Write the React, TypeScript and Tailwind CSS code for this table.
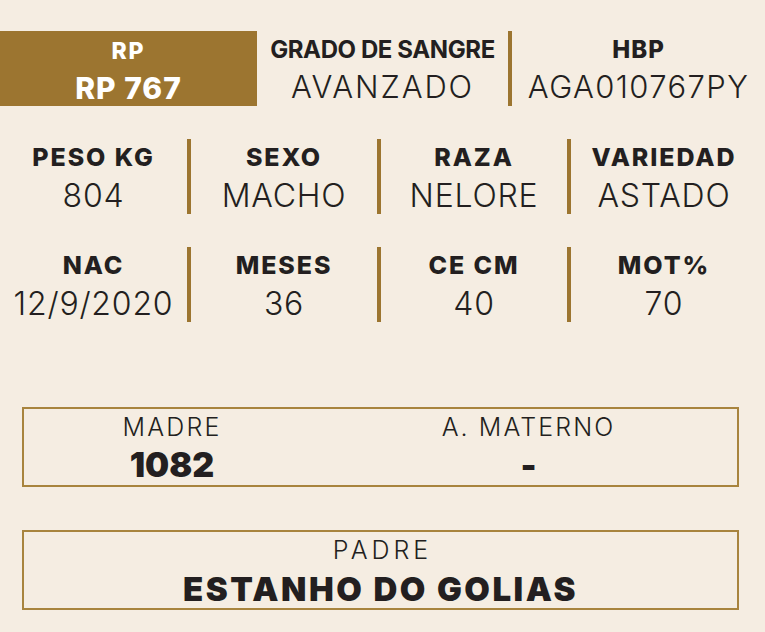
import React from "react";

const Divider = () => <div className="w-[4px] self-stretch bg-[#9c7530]" />;

function Stat({ label, value, w }: { label: string; value: string; w: string }) {
  return (
    <div className={`${w} flex flex-col items-center pt-[3px]`}>
      <div className="h-[30px] text-[25px] leading-[30px] font-extrabold tracking-[1.9px] text-[#231f20] whitespace-nowrap">{label}</div>
      <div className="mt-[5px] h-[38px] text-[32px] leading-[38px] font-light tracking-[0.8px] text-[#231f20] whitespace-nowrap">{value}</div>
    </div>
  );
}

function StatRow({ items }: { items: [string, string][] }) {
  return (
    <div className="flex h-[75px]">
      <Stat label={items[0][0]} value={items[0][1]} w="w-[187px]" />
      <Divider />
      <Stat label={items[1][0]} value={items[1][1]} w="w-[186px]" />
      <Divider />
      <Stat label={items[2][0]} value={items[2][1]} w="w-[186px]" />
      <Divider />
      <Stat label={items[3][0]} value={items[3][1]} w="w-[186px]" />
    </div>
  );
}

export default function App() {
  return (
    <div className="w-[765px] h-[632px] bg-[#f5ede2] pt-[31px] font-['Inter',sans-serif] text-[#231f20] overflow-hidden">
      {/* Top row */}
      <div className="flex h-[75px]">
        <div className="w-[257px] bg-[#9c7530] flex flex-col items-center pt-[6px] text-white">
          <div className="h-[28px] text-[23px] leading-[28px] font-extrabold tracking-[2px]">RP</div>
          <div className="mt-[5px] h-[36px] text-[30px] leading-[36px] font-extrabold tracking-[1px] whitespace-nowrap">RP 767</div>
        </div>
        <div className="w-[251px] flex flex-col items-center pt-[5px]">
          <div className="h-[28px] text-[24px] leading-[28px] font-bold tracking-[-0.4px] whitespace-nowrap">GRADO DE SANGRE</div>
          <div className="mt-[5px] h-[36px] text-[31px] leading-[36px] font-light tracking-[1.9px] whitespace-nowrap">AVANZADO</div>
        </div>
        <Divider />
        <div className="flex-1 flex flex-col items-center pt-[5px]">
          <div className="h-[28px] text-[24px] leading-[28px] font-extrabold tracking-[1px]">HBP</div>
          <div className="mt-[5px] h-[36px] text-[31px] leading-[36px] font-light tracking-[1.4px] whitespace-nowrap">AGA010767PY</div>
        </div>
      </div>

      {/* Stats */}
      <div className="mt-[33px]">
        <StatRow items={[["PESO KG", "804"], ["SEXO", "MACHO"], ["RAZA", "NELORE"], ["VARIEDAD", "ASTADO"]]} />
      </div>
      <div className="mt-[33px]">
        <StatRow items={[["NAC", "12/9/2020"], ["MESES", "36"], ["CE CM", "40"], ["MOT%", "70"]]} />
      </div>

      {/* Madre box */}
      <div className="ml-[22px] mt-[85px] w-[717px] h-[80px] border-2 border-[#a8843e] flex">
        <div className="w-[296px] flex flex-col items-center pt-[3px]">
          <div className="h-[30px] text-[25px] leading-[30px] font-light tracking-[2.2px]">MADRE</div>
          <div className="mt-[3px] h-[40px] text-[34px] leading-[40px] font-black">1082</div>
        </div>
        <div className="flex-1 flex flex-col items-center pt-[3px]">
          <div className="h-[30px] text-[25px] leading-[30px] font-light tracking-[2.1px] whitespace-nowrap">A. MATERNO</div>
          <div className="mt-[3px] h-[40px] text-[34px] leading-[40px] font-black">-</div>
        </div>
      </div>

      {/* Padre box */}
      <div className="ml-[22px] mt-[43px] w-[717px] h-[80px] border-2 border-[#a8843e] flex flex-col items-center pt-[3px]">
        <div className="h-[30px] text-[25px] leading-[30px] font-light tracking-[4px] pl-[4px]">PADRE</div>
        <div className="mt-[5px] h-[38px] text-[33px] leading-[38px] font-black tracking-[2.5px] whitespace-nowrap">ESTANHO DO GOLIAS</div>
      </div>
    </div>
  );
}
